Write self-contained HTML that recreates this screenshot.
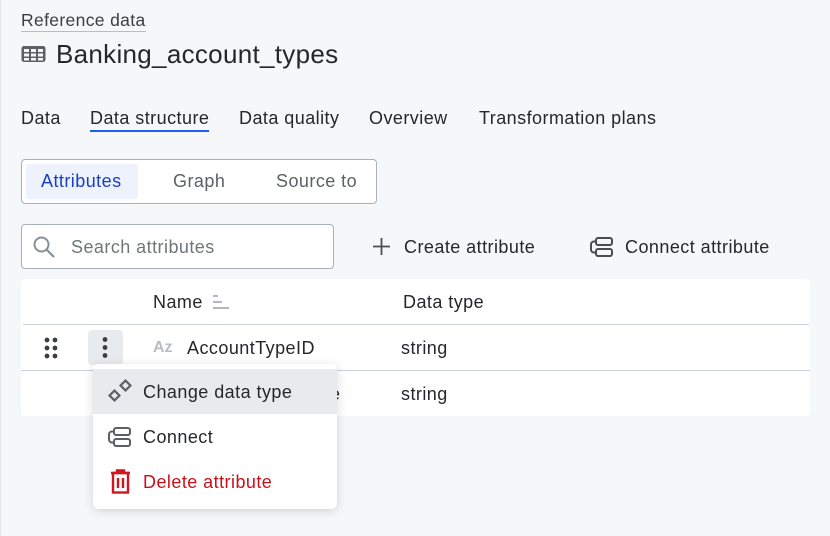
<!DOCTYPE html>
<html><head><style>
*{box-sizing:border-box;margin:0;padding:0}
body{width:830px;height:536px;background:#f6f7f9;font-family:"Liberation Sans",sans-serif;color:#25272b;position:relative;overflow:hidden}
.a{position:absolute;white-space:nowrap}
.t{font-size:18px;letter-spacing:0.45px;line-height:22px}
</style></head><body>
<div class="a" style="left:0;top:0;width:1px;height:536px;background:#e3e6ea"></div>
<div class="a" style="left:21px;top:10px;font-size:17.5px;letter-spacing:0.35px;color:#3a3d42;border-bottom:1px solid #b9bdc3;line-height:21px">Reference data</div>
<svg class="a" style="left:21px;top:44px" width="25" height="20" viewBox="0 0 25 20"><rect x="0.5" y="2" width="24" height="16" rx="2.5" fill="#5c6066"/><g fill="#f6f7f9"><rect x="3" y="5" width="5" height="3"/><rect x="10" y="5" width="5" height="3"/><rect x="17" y="5" width="5" height="3"/><rect x="3" y="9.5" width="5" height="3"/><rect x="10" y="9.5" width="5" height="3"/><rect x="17" y="9.5" width="5" height="3"/><rect x="3" y="14" width="5" height="2.5"/><rect x="10" y="14" width="5" height="2.5"/><rect x="17" y="14" width="5" height="2.5"/></g></svg>
<div class="a" style="left:56px;top:38px;font-size:26px;letter-spacing:0.3px;line-height:32px;color:#25272b">Banking_account_types</div>
<div class="a t" style="top:107px;left:21px">Data</div>
<div class="a t" style="top:107px;left:90px">Data structure</div>
<div class="a" style="left:90px;top:130px;width:119px;height:2px;background:#1f5ff0"></div>
<div class="a t" style="top:107px;left:239px">Data quality</div>
<div class="a t" style="top:107px;left:369px">Overview</div>
<div class="a t" style="top:107px;left:479px">Transformation plans</div>
<div class="a" style="left:21px;top:159px;width:356px;height:45px;border:1px solid #a9b0b8;border-radius:4px;background:#fff"></div>
<div class="a" style="left:26px;top:164px;width:112px;height:35px;background:#eef2fd;border-radius:3px"></div>
<div class="a t" style="left:41px;top:170px;color:#1b3fc4">Attributes</div>
<div class="a t" style="left:173px;top:170px;color:#5c6066">Graph</div>
<div class="a t" style="left:276px;top:170px;color:#5c6066">Source to</div>
<div class="a" style="left:21px;top:224px;width:313px;height:45px;border:1px solid #a9b0b8;border-radius:4px;background:#fff"></div>
<svg class="a" style="left:32px;top:235px" width="24" height="24" viewBox="0 0 24 24"><circle cx="9.5" cy="9.5" r="7" fill="none" stroke="#8a8f96" stroke-width="2"/><path d="M14.5 14.5L22 22" stroke="#8a8f96" stroke-width="2.2"/></svg>
<div class="a t" style="left:71px;top:236px;color:#70757c">Search attributes</div>
<svg class="a" style="left:372px;top:237px" width="19" height="19"><path d="M9.5 1v17M1 9.5h17" stroke="#4a4d52" stroke-width="1.8"/></svg>
<div class="a t" style="left:404px;top:236px">Create attribute</div>
<svg class="a" style="left:590px;top:236px" width="24" height="22" viewBox="0 0 24 22"><g fill="none" stroke="#4a4d52" stroke-width="2"><rect x="6" y="2" width="16" height="7" rx="2"/><rect x="6" y="13" width="16" height="7" rx="2"/><path d="M6 5.5H4a3 3 0 0 0-3 3v5a3 3 0 0 0 3 3h2"/></g></svg>
<div class="a t" style="left:625px;top:236px">Connect attribute</div>
<div class="a" style="left:21px;top:279px;width:789px;height:137px;background:#fff;border-radius:4px"></div>
<div class="a t" style="left:153px;top:291px">Name</div>
<svg class="a" style="left:211px;top:294px" width="20" height="16"><path d="M2 2h5M2 8h9M2 14h16" stroke="#b3b7bd" stroke-width="2"/></svg>
<div class="a t" style="left:403px;top:291px">Data type</div>
<div class="a" style="left:23px;top:324px;width:786px;height:1px;background:#c9d1da"></div>
<div class="a" style="left:21px;top:370px;width:789px;height:1px;background:#c9d1da"></div>
<svg class="a" style="left:44px;top:337px" width="14" height="22"><g fill="#3a3d42"><circle cx="3" cy="3" r="2.4"/><circle cx="11" cy="3" r="2.4"/><circle cx="3" cy="11" r="2.4"/><circle cx="11" cy="11" r="2.4"/><circle cx="3" cy="19" r="2.4"/><circle cx="11" cy="19" r="2.4"/></g></svg>
<div class="a" style="left:88px;top:330px;width:35px;height:35px;background:#e8ebee;border-radius:4px"></div>
<svg class="a" style="left:101px;top:336px" width="8" height="24"><g fill="#3a3d42"><circle cx="4" cy="3.5" r="2.4"/><circle cx="4" cy="11.5" r="2.4"/><circle cx="4" cy="19.5" r="2.4"/></g></svg>
<div class="a" style="left:153px;top:339px;font-size:16px;font-weight:bold;color:#b8bcc2">Az</div>
<div class="a t" style="left:187px;top:337px">AccountTypeID</div>
<div class="a t" style="left:401px;top:337px">string</div>
<div class="a t" style="left:330px;top:383px">e</div>
<div class="a t" style="left:401px;top:383px">string</div>
<div class="a" style="left:93px;top:364px;width:244px;height:145px;background:#fff;border-radius:5px;box-shadow:0 2px 10px rgba(0,0,0,.15)"></div>
<div class="a" style="left:93px;top:369px;width:244px;height:45px;background:#e8ebee"></div>
<svg class="a" style="left:108px;top:379px" width="24" height="24" viewBox="0 0 24 24"><g fill="none" stroke="#5c6066" stroke-width="2.2"><rect x="3" y="13" width="7" height="7" transform="rotate(45 6.5 16.5)"/><rect x="14" y="3" width="7" height="7" transform="rotate(45 17.5 6.5)"/></g></svg>
<div class="a t" style="left:143px;top:381px">Change data type</div>
<svg class="a" style="left:108px;top:426px" width="24" height="22" viewBox="0 0 24 22"><g fill="none" stroke="#5c6066" stroke-width="2"><rect x="6" y="2" width="16" height="7" rx="2"/><rect x="6" y="13" width="16" height="7" rx="2"/><path d="M6 5.5H4a3 3 0 0 0-3 3v5a3 3 0 0 0 3 3h2"/></g></svg>
<div class="a t" style="left:143px;top:426px">Connect</div>
<svg class="a" style="left:110px;top:469px" width="21" height="25" viewBox="0 0 21 25"><g fill="none" stroke="#d0161d" stroke-width="2.4"><path d="M1 4h19M7 4V1.5h7V4"/><rect x="3" y="4" width="15" height="19.5"/><path d="M8 9v10M13 9v10"/></g></svg>
<div class="a t" style="left:143px;top:471px;color:#c8111a">Delete attribute</div>
</body></html>
